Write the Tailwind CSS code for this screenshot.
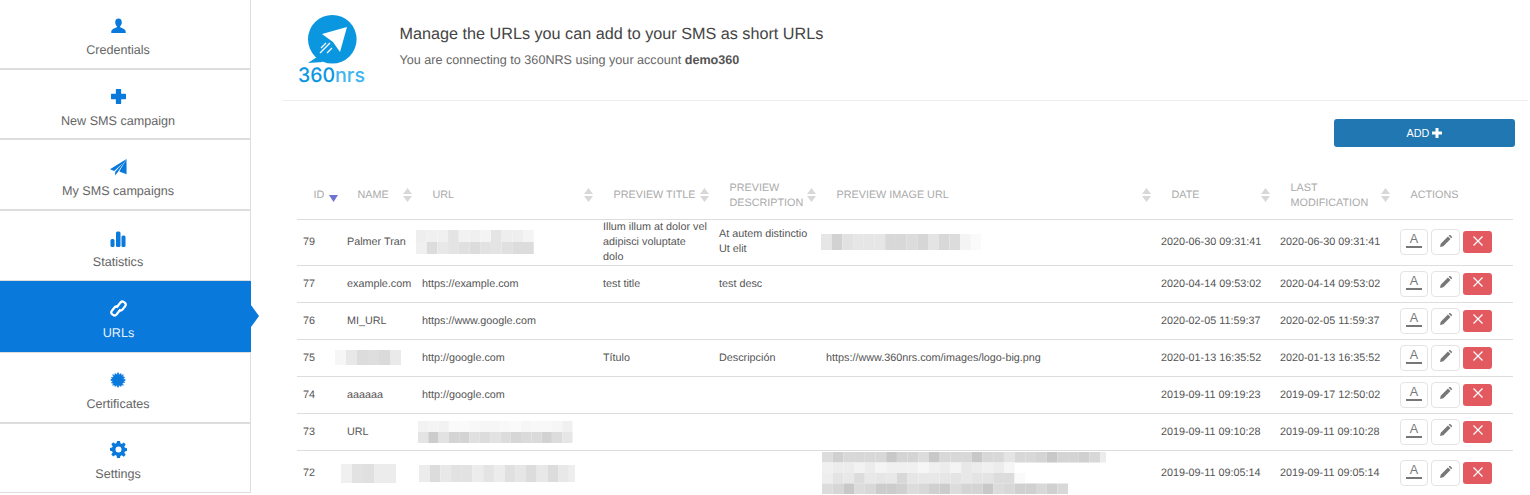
<!DOCTYPE html>
<html lang="en">

<head>
  <meta charset="UTF-8">
  <meta name="viewport" content="width=device-width, initial-scale=1.0">
  <title>URLs</title>
  <script src="https://cdn.jsdelivr.net/npm/@tailwindcss/browser@4"></script>
</head>

<body class="bg-white font-['Liberation_Sans',Arial,sans-serif] [text-rendering:geometricPrecision] overflow-hidden">
  <div class="flex h-[495px] w-[1530px] overflow-hidden">

    <!-- sidebar -->
    <nav class="w-[251px] shrink-0 h-[493px] border-r border-b border-[#ddd] text-[12.6px] text-[#666]">
      <a class="h-[70px] pr-[14px] flex flex-col items-center border-b-2 border-[#ddd]">
        <svg class="mt-[18px] w-[17px] h-[16px] fill-[#0979db]" viewBox="0 0 17 17"><path d="M8.500 0.500c2.400 0 3.500 1.800 3.500 3.900 0 1.700-.7 3.200-1.600 4.200-.5.6-.3 1.300.4 1.600 2.300.9 5 1.600 5.400 4.600v1.200H.8v-1.200c.4-3 3.100-3.700 5.400-4.600.7-.3.9-1 .4-1.600C5.700 7.600 5 6.100 5 4.400 5 2.300 6.100.5 8.500.5z"/></svg>
        <span class="mt-[9px] leading-[15px]">Credentials</span>
      </a>
      <a class="h-[70px] pr-[14px] flex flex-col items-center border-b-2 border-[#ddd]">
        <svg class="mt-[19px] w-[15px] h-[15px] fill-[#0979db]" viewBox="0 0 17 17"><path d="M6 0h5a.5.5 0 0 1 .5.5V5.500h5a.5.5 0 0 1 .5.5v5a.5.5 0 0 1-.5.5h-5v5a.5.5 0 0 1-.5.5H6a.5.5 0 0 1-.5-.5v-5h-5a.5.5 0 0 1-.5-.5V6a.5.5 0 0 1 .5-.5h5V.5A.5.5 0 0 1 6 0z"/></svg>
        <span class="mt-[10px] leading-[15px]">New SMS campaign</span>
      </a>
      <a class="h-[71px] pr-[14px] flex flex-col items-center border-b-2 border-[#ddd]">
        <svg class="mt-[19px] w-[17px] h-[17px] fill-[#0979db]" viewBox="0 0 17 17"><path d="M16.500 0 0 10.300l4.200 1.700L13 4 5.200 12.800 5 16.500l2.700-3.200z"/><path d="M16.500 0l.1 15.300-6.800-2.500-.4-.6z"/></svg>
        <span class="mt-[8px] leading-[15px]">My SMS campaigns</span>
      </a>
      <a class="h-[70px] pr-[14px] flex flex-col items-center border-b border-[#ddd]">
        <svg class="mt-[20px] w-[16px] h-[16px] fill-[#0979db]" viewBox="0 0 16 16"><rect x="0.500" y="8" width="4" height="8" rx="1.500"/><rect x="6" y="0.500" width="4.500" height="15.500" rx="1.500"/><rect x="11.500" y="4.500" width="4" height="11.500" rx="1.500"/></svg>
        <span class="mt-[8px] leading-[15px]">Statistics</span>
      </a>
      <a class="relative h-[72px] pr-[14px] flex flex-col items-center border-b border-[#ddd] bg-[#0979db] text-[#e8f2fb] mr-[-1px]">
        <svg class="mt-[19px] w-[17px] h-[17px] fill-none stroke-white stroke-[2.200]" viewBox="0 0 17 17"><path d="M6.500 7.500 10.500 2.500a2.500 2.500 0 0 1 3.400-.4l.8.6a2.500 2.500 0 0 1 .4 3.500L12.500 9.500a2.500 2.500 0 0 1-3.500.3"/><path d="M10.500 9.500 6.500 14.500a2.500 2.500 0 0 1-3.400.4l-.8-.6a2.500 2.500 0 0 1-.4-3.500L4.500 7.500A2.500 2.500 0 0 1 8 7.200"/></svg>
        <span class="mt-[9px] leading-[15px]">URLs</span>
        <span class="absolute left-full top-[24px] w-0 h-0 border-y-[11px] border-y-transparent border-l-[8px] border-l-[#0979db]"></span>
      </a>
      <a class="h-[71px] pr-[14px] flex flex-col items-center border-b-2 border-[#ddd]">
        <svg class="mt-[19px] w-[16px] h-[16px] fill-[#0979db]" viewBox="0 0 16 16"><circle cx="8" cy="8" r="6"/><path d="M8 0l1.300 2H6.700zM8 16l-1.300-2h2.600zM0 8l2-1.300v2.600zM16 8l-2 1.300V6.700zM2.300 2.300l2.300.6-1.700 1.700zM13.700 13.700l-2.300-.6 1.700-1.700zM13.700 2.300l-.6 2.300-1.700-1.700zM2.300 13.700l.6-2.300 1.700 1.700zM4.900.9l1.800 1.500-2.400 1zM11.100 15.100l-1.800-1.500 2.400-1zM11.100.9l.6 2.500-2.400-1zM4.900 15.100l-.6-2.500 2.400 1zM.9 4.900l2.500.6-1 2.400zM15.100 11.100l-2.500-.6 1-2.400zM15.100 4.900l-1.500 1.800-1-2.400zM.9 11.100l1.500-1.800 1 2.400z"/></svg>
        <span class="mt-[9px] leading-[15px]">Certificates</span>
      </a>
      <a class="h-[69px] pr-[14px] flex flex-col items-center">
        <svg class="mt-[17px] w-[17px] h-[17px] fill-[#0979db]" viewBox="0 0 17 17"><path fill-rule="evenodd" d="M7 0h3l.4 2.300 1.400.6L13.700 1.500l2 2-1.400 1.900.6 1.400 2.300.4v2.800l-2.300.4-.6 1.400 1.400 1.900-2 2-1.900-1.400-1.400.6L10 17H7l-.4-2.300-1.400-.6-1.900 1.400-2-2 1.400-1.900-.6-1.400L-.2 9.800V7l2.300-.4.6-1.400-1.400-1.900 2-2 1.900 1.400 1.400-.6zM8.500 5.500a3 3 0 1 0 0 6 3 3 0 0 0 0-6z"/></svg>
        <span class="mt-[9px] leading-[15px]">Settings</span>
      </a>
    </nav>

    <main class="flex-1 min-w-0 pl-[31px]">
      <!-- header -->
      <header class="h-[101px] w-[1246px] border-b border-[#eee] flex">
        <svg class="ml-[16px] mt-[15px] w-[68px] h-[76px]" viewBox="0 0 68 76">
          <circle cx="34.300" cy="24.300" r="24.300" fill="#0b97e0"/>
          <path d="M10 48 19 42 25 47z" fill="#0b97e0"/>
          <path d="M24 19 49 12 42 37 35 27z" fill="#fff"/>
          <path d="M23 33l5-5M22 38l10-10M29 38l5-5" stroke="#fff" stroke-width="1.300" fill="none"/>
          <text x="0" y="67" font-family="Inter" font-weight="500" font-size="20" fill="#0b97e0" textLength="37" lengthAdjust="spacingAndGlyphs">360</text>
          <text x="37" y="67" font-family="Inter" font-weight="500" font-size="20" fill="#3fb5f1" textLength="30" lengthAdjust="spacingAndGlyphs">nrs</text>
        </svg>
        <div class="ml-[33.5px] pt-[24px]">
          <h1 class="text-[16.2px] leading-[20px] text-[#444]">Manage the URLs you can add to your SMS as short URLs</h1>
          <p class="mt-[8px] text-[12.6px] leading-[16px] text-[#666]">You are connecting to 360NRS using your account <b class="text-[#555]">demo360</b></p>
        </div>
      </header>

      <div class="w-[1233px] pt-[18px] pl-[15px]">
        <div class="flex justify-end">
          <button class="w-[181px] h-[28px] rounded-[3px] bg-[#2077b2] text-white text-[10.8px] flex items-center justify-center gap-[3px]">ADD
            <svg class="w-[10px] h-[10px] fill-white" viewBox="0 0 10 10"><path d="M3.500 0h3v3.500H10v3H6.500V10h-3V6.500H0v-3h3.500z"/></svg>
          </button>
        </div>

        <table class="mt-[20px] w-[1216px] table-fixed border-collapse text-[10.8px] text-[#555]">
          <colgroup>
            <col class="w-[44px]"><col class="w-[75px]"><col class="w-[181px]"><col class="w-[116px]"><col class="w-[107px]"><col class="w-[335px]"><col class="w-[119px]"><col class="w-[120px]"><col class="w-[119px]">
          </colgroup>
          <thead>
            <tr class="h-[52px] border-b border-[#ddd] text-[#aaa] text-left font-normal">
              <th class="font-normal pl-[16.5px] pt-[4px] relative">ID<svg class="absolute right-[3px] top-[28px] w-[9px] h-[7px]" viewBox="0 0 9 7"><path d="M0 0h9L4.500 7z" fill="#6f73d2"/></svg></th>
              <th class="font-normal pl-[16.5px] pt-[4px] relative">NAME<span data-sort></span></th>
              <th class="font-normal pl-[16.5px] pt-[4px] relative">URL<span data-sort></span></th>
              <th class="font-normal pl-[16.5px] pt-[4px] relative">PREVIEW TITLE<span data-sort></span></th>
              <th class="font-normal pl-[16.5px] pr-[8px] pt-[6px] leading-[15px] relative">PREVIEW DESCRIPTION<span data-sort></span></th>
              <th class="font-normal pl-[16.5px] pt-[4px] relative">PREVIEW IMAGE URL<span data-sort></span></th>
              <th class="font-normal pl-[16.5px] pt-[4px] relative">DATE<span data-sort></span></th>
              <th class="font-normal pl-[16.5px] pr-[8px] pt-[6px] leading-[15px] relative">LAST MODIFICATION<span data-sort></span></th>
              <th class="font-normal pl-[16.5px] pt-[4px]">ACTIONS</th>
            </tr>
          </thead>
          <tbody id="rows"></tbody>
        </table>
      </div>
    </main>
  </div>

  <template id="sort-icon">
    <svg class="absolute right-[4px] top-[21px] w-[9px] h-[14px]" viewBox="0 0 9 14"><path d="M0 6 4.500 0 9 6zM0 8h9l-4.500 6z" fill="#d8d8d8"/></svg>
  </template>

  <template id="actions">
    <div class="flex items-center gap-[3px]">
      <button class="w-[28px] h-[26px] border border-[#e4e4e4] rounded-[4px] flex flex-col items-center justify-start pt-[3px]">
        <span class="text-[12.6px] leading-[12px] text-[#777]">A</span>
        <span class="w-[16px] h-[2px] mt-[1px] bg-[#777]"></span>
      </button>
      <button class="w-[29px] h-[26px] border border-[#e4e4e4] rounded-[4px] flex items-center justify-center pb-[3px]">
        <svg class="w-[12px] h-[12px] fill-[#777]" viewBox="0 0 13 13"><path d="M0 13l.8-3.600L8.600 1.600l2.800 2.800-7.800 7.800zM9.400.8 10.200 0q.4-.3.800 0l2 2q.3.4 0 .8l-.8.800z"/></svg>
      </button>
      <button class="w-[29px] h-[22px] rounded-[3px] bg-[#e25a5f] flex items-center justify-center pb-[3px]">
        <svg class="w-[10px] h-[10px] stroke-white stroke-[1.200]" viewBox="0 0 10 10"><path d="M.5.500l9 9M9.500.500l-9 9"/></svg>
      </button>
    </div>
  </template>

  <script>
    // the blurred-out cells of the screenshot: [x, y, cell width, cell height, greys]
    const blur = (cls, w, h, rects) => `<svg class="block ${cls}" width="${w}" height="${h}">` + rects.map(([x, y, cw, ch, greys]) =>
      greys.map((g, i) => `<rect x="${x + i * cw}" y="${y}" width="${cw}" height="${ch}" fill="#${g.repeat(3)}"/>`).join("")).join("") + "</svg>";

    const blur79url = blur("", 118, 24, [[0, 0, 10.7, 12, ["ee","f0","f0","e4","f2","f0","f4","e4","ee","ee","f4"]], [0, 12, 10.7, 12, ["f0","dc","e8","e4","e0","dc","e2","e4","e0","dc","dc"]]]);
    const blur79img = blur("ml-[1px]", 160, 16, [[0, 0, 10.7, 16, ["e6","d2","e2","e6","e6","e6","d8","d8","dc","d6","e4","d8","dc","f4","fa"]]]);
    const blur75 = blur("-ml-[6px]", 66, 15, [[0, 0, 11, 15, ["f6","e8","dc","de","da","ea"]]]);
    const blur73 = blur("ml-[2px]", 155, 22, [[0, 0, 10.3, 11, ["f2","f4","f2","fa","fa","f8","f6","f6","f8","fa","f6","f8","f8","f6","f0"]], [0, 11, 10.3, 11, ["e4","cc","e2","d4","d4","e0","dc","e2","dc","d6","da","da","d2","dc","e6"]]]);
    const blur72name = blur("", 55, 19, [[0, 0, 11, 19, ["f0","e2","e0","ec","ec"]]]);
    const blur72url = blur("ml-[3px]", 156, 17, [[0, 0, 10.7, 17, ["ec","dc","e8","e2","e2","ec","e4","ec","e0","e6","dc","e8","dc","e8","ee"]]]);
    const blur72img = blur("ml-[2px]", 284, 42, [
      [0, 0, 10.7, 10.5, ["dc","d0","d8","d8","d8","d8","c8","d4","d4","dc","c8","d8","d8","d8","c8","d8","d8","e4","d8","d8","d4","c8","d4","d4","d0","d8","ec"]],
      [0, 10.5, 10.7, 10.5, ["f0","ec","ec","f2","ec","f4","f0","f0","f0","f6","f0","ec","f4","e8","ec","f0","ec","f6"]],
      [0, 21, 10.7, 10.5, ["ee","e4","e8","dc","e8","e6","e8","d8","e6","e8","e8","e6","e4","e8","e4","e4","dc","dc","fa"]],
      [0, 31.5, 10.7, 10.5, ["dc","d6","c8","dc","d8","cc","cc","d0","dc","d8","d0","cc","dc","d4","d4","c8","dc","d8","d0","d0","d8","d0","d8"]]
    ]);

    // id, name, url, title, description, image, date, modified, row height
    const data = [
      ["79", "Palmer Tran", blur79url, "Illum illum at dolor vel adipisci voluptate dolo", "At autem distinctio Ut elit", blur79img, "2020-06-30 09:31:41", "2020-06-30 09:31:41", 46],
      ["77", "example.com", "https://example.com", "test title", "test desc", "", "2020-04-14 09:53:02", "2020-04-14 09:53:02", 37],
      ["76", "MI_URL", "https://www.google.com", "", "", "", "2020-02-05 11:59:37", "2020-02-05 11:59:37", 37],
      ["75", blur75, "http://google.com", "Título", "Descripción", "https://www.360nrs.com/images/logo-big.png", "2020-01-13 16:35:52", "2020-01-13 16:35:52", 37],
      ["74", "aaaaaa", "http://google.com", "", "", "", "2019-09-11 09:19:23", "2019-09-17 12:50:02", 37],
      ["73", "URL", blur73, "", "", "", "2019-09-11 09:10:28", "2019-09-11 09:10:28", 37],
      ["72", blur72name, blur72url, "", "", blur72img, "2019-09-11 09:05:14", "2019-09-11 09:05:14", 46],
    ];

    const isBlur = (v) => v.startsWith("<svg");
    const rows = document.getElementById("rows");
    const actions = document.getElementById("actions").innerHTML;

    data.forEach((r) => {
      const tr = document.createElement("tr");
      tr.className = "border-b border-[#ddd] last:border-b-0";
      tr.style.height = r[8] + "px";
      // the first row is exactly three lines tall, a top padding would stretch it
      const pad = r[0] === "79" ? "pl-[6px] pr-[5px]" : "pl-[6px] pr-[5px] pt-[1px]";
      tr.innerHTML = r.slice(0, 8).map((v) =>
        `<td class="${isBlur(v) ? "p-0" : pad} leading-[15px]">${v}</td>`).join("")
        + `<td class="px-[6px] py-0">${actions}</td>`;
      rows.appendChild(tr);
    });

    const sortIcon = document.getElementById("sort-icon").innerHTML;
    document.querySelectorAll("[data-sort]").forEach((el) => { el.outerHTML = sortIcon; });
  </script>
</body>

</html>
